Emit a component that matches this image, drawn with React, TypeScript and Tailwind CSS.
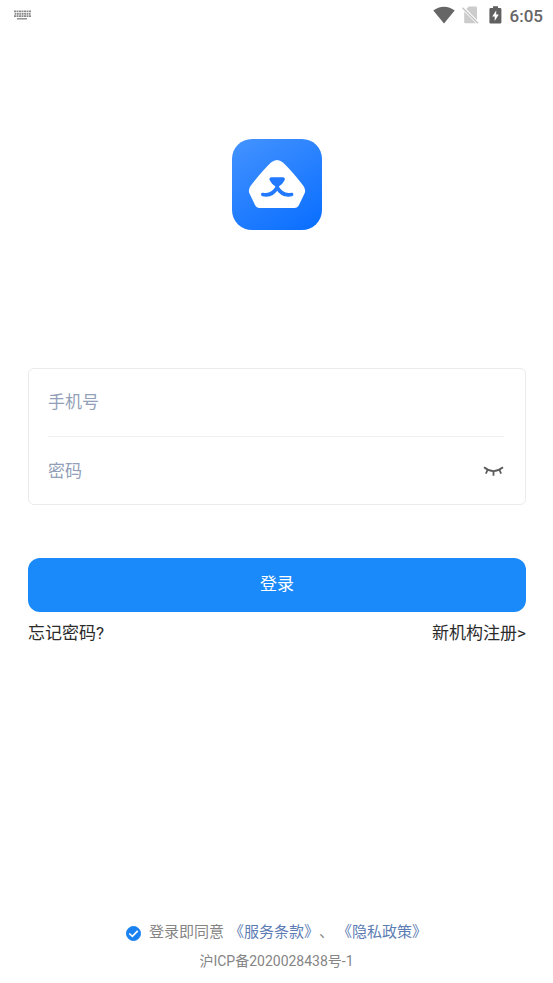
import React, { useState } from "react";

const StatusBar = () => {
  return (
    <header className="flex h-8 items-center justify-between pr-[10px] pl-[14px] text-[#666666]">
      <svg width="17" height="10" viewBox="0 0 17 10" className="mb-[2px]" aria-hidden="true">
        <g stroke="#8a8a8a" strokeWidth="1.8">
          <path d="M0 1.4h17" strokeDasharray="2 0.5" />
          <path d="M0.6 3.8h16" strokeDasharray="1.8 0.6" />
          <path d="M0 6.2h17" strokeDasharray="2 0.5" />
          <path d="M3 8.8h10" strokeWidth="1.4" />
        </g>
      </svg>
      <div className="flex items-center">
        <svg width="22" height="18" viewBox="0 0 22 18" className="mr-[7px] mb-[2px]" aria-hidden="true">
          <path d="M0.3 4.6C6.3-0.6 15.7-0.6 21.7 4.6L11 17.6z" fill="#666666" />
        </svg>
        <svg width="17" height="18" viewBox="0 0 17 18" className="mr-[10px] mb-[2px]" aria-hidden="true">
          <path d="M6.6 0.5H14Q15 0.5 15 1.5V14L4.4 3z" fill="#cccccc" />
          <path d="M2.2 5.6L14 17.3H3.3Q2.2 17.3 2.2 16.2z" fill="#cccccc" />
          <path d="M0.5 1.7L16 17.2" stroke="#c4c4c4" strokeWidth="1.5" />
        </svg>
        <svg width="13" height="18" viewBox="0 0 13 18" className="mr-[8px] mb-[2px]" aria-hidden="true">
          <path
            d="M4 0.3h5v1.7h2.2q1.2 0 1.2 1.2v13q0 1.2-1.2 1.2H1.6q-1.2 0-1.2-1.2v-13Q0.4 2 1.6 2H4z"
            fill="#606060"
          />
          <path d="M7.2 4.4L3.2 10.6h2.5v4.4l4.1-6.4H7.2z" fill="#ffffff" />
        </svg>
        <span className="text-[17px] leading-8 font-medium">6:05</span>
      </div>
    </header>
  );
};

const Logo = () => {
  return (
    <svg width="90" height="91" viewBox="0 0 90 91" role="img" aria-label="logo">
      <defs>
        <linearGradient id="logoFill" x1="0.2" y1="0" x2="0.8" y2="1">
          <stop offset="0" stopColor="#4090ff" />
          <stop offset="1" stopColor="#0c70ff" />
        </linearGradient>
      </defs>
      <rect width="90" height="91" rx="20" fill="url(#logoFill)" />
      <path
        d="M39 23.5Q45 18.500 51 23.500Q60 32 71.500 47Q74.200 51 72.500 54.500L67 66Q65.500 69 62.500 69H27.500Q24.500 69 23 66L17.500 54.500Q15.800 51 18.500 47Q30 32 39 23.500z"
        fill="#ffffff"
      />
      <path
        d="M39.500 38.300H50.800Q53.600 38.600 52.600 41.300Q50.500 45.500 46.800 47.500V50H43.500V47.500Q39.800 45.500 37.700 41.300Q36.700 38.600 39.500 38.300z"
        fill="#2079ff"
      />
      <path
        d="M30.800 55.500Q40 57.500 45.200 48.500Q50.400 57.500 59.600 55.500"
        fill="none"
        stroke="#2079ff"
        strokeWidth="3.600"
        strokeLinecap="round"
        strokeLinejoin="round"
      />
    </svg>
  );
};

const LoginForm = () => {
  const [phone, setPhone] = useState<string>("");
  const [password, setPassword] = useState<string>("");
  const [visible, setVisible] = useState<boolean>(false);

  return (
    <form onSubmit={(e: React.FormEvent) => e.preventDefault()}>
      <div className="rounded-md border border-[#ebebeb] pr-[21px] pl-[19px]">
        <div className="flex h-[68px] items-center border-b border-[#f0f0f0] pb-[2px]">
          <input
            type="tel"
            aria-label="手机号"
            placeholder="手机号"
            value={phone}
            onChange={(e) => setPhone(e.target.value)}
            className="h-10 min-w-0 flex-1 text-[17px] outline-none placeholder:text-[#939fb8]"
          />
        </div>
        <div className="flex h-[67px] items-center">
          <input
            type={visible ? "text" : "password"}
            aria-label="密码"
            placeholder="密码"
            value={password}
            onChange={(e) => setPassword(e.target.value)}
            className="h-10 min-w-0 flex-1 text-[17px] outline-none placeholder:text-[#939fb8]"
          />
          <button
            type="button"
            aria-label="显示密码"
            onClick={() => setVisible(!visible)}
            className="cursor-pointer"
          >
            <svg width="22" height="12" viewBox="0 0 22 12" fill="none" stroke="#5c5c5c" strokeWidth="1.800">
              <path d="M2 2.300Q11.500 10 21 2.300" />
              <path d="M5.500 5L3.900 8.600M11.500 6.500V10.800M17.500 5L19.100 8.600" />
            </svg>
          </button>
        </div>
      </div>
      <button
        type="submit"
        className="mt-[53px] h-[54px] w-full cursor-pointer rounded-xl bg-[#1a89fa] pb-px text-[17px] text-white"
      >
        登录
      </button>
      <div className="mt-[9px] flex justify-between text-[17px] leading-6 text-[#2b2b2b]">
        <a href="#forgot">忘记密码?</a>
        <a href="#register">新机构注册&gt;</a>
      </div>
    </form>
  );
};

const Agreement = () => {
  const [agreed, setAgreed] = useState<boolean>(true);

  return (
    <footer className="mt-auto flex flex-col items-center pb-3 text-[#858585]">
      <div className="flex items-center text-[15px] leading-6">
        <span className="mt-[3px] mr-2 grid">
          <input
            id="agree"
            type="checkbox"
            checked={agreed}
            onChange={(e) => setAgreed(e.target.checked)}
            className="col-start-1 row-start-1 size-[15px] appearance-none rounded-full border border-[#b0b0b0] checked:border-[#1a82f0] checked:bg-[#1a82f0]"
          />
          {agreed && (
            <svg
              viewBox="0 0 16 16"
              className="pointer-events-none col-start-1 row-start-1 size-[15px]"
              fill="none"
              stroke="#ffffff"
              strokeWidth="1.800"
            >
              <path d="M3.500 8L6.800 11L12.500 5.300" />
            </svg>
          )}
        </span>
        <label htmlFor="agree" className="mr-[5px]">
          登录即同意
        </label>
        <a href="#terms" className="text-[#5c7cb3]">
          《服务条款》
        </a>
        <span className="mr-[3px]">、</span>
        <a href="#privacy" className="text-[#5c7cb3]">
          《隐私政策》
        </a>
      </div>
      <p className="mt-[7px] text-[14px] leading-5">沪ICP备2020028438号-1</p>
    </footer>
  );
};

const App = () => {
  return (
    <div className="flex min-h-screen flex-col bg-white font-[Roboto,'Noto_Sans_CJK_SC',sans-serif]">
      <StatusBar />
      <main className="flex flex-1 flex-col">
        <div className="flex justify-center pt-[107px] pb-[138px]">
          <Logo />
        </div>
        <div className="pr-[27px] pl-7">
          <LoginForm />
        </div>
        <Agreement />
      </main>
    </div>
  );
};

export default App;
